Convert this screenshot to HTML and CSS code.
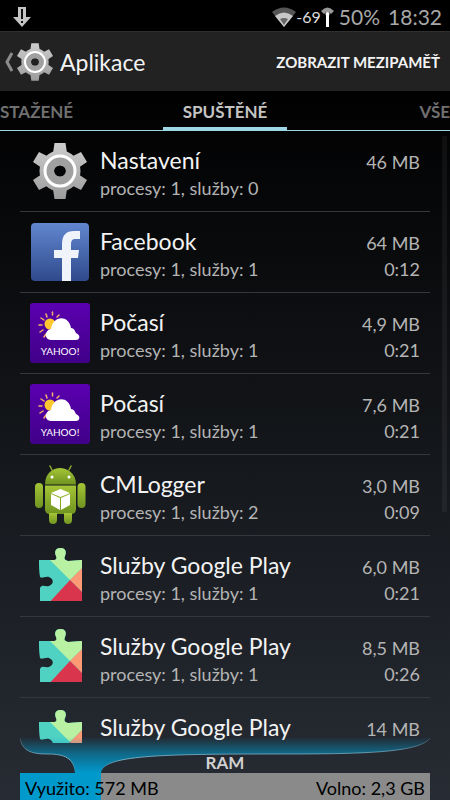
FILE: index.html
```html
<!DOCTYPE html>
<html lang="cs">
<head>
    <meta charset="UTF-8">
    <meta name="viewport" content="width=device-width, initial-scale=1.0">
    <title>Aplikace</title>
    <link rel="stylesheet" href="styles.css">
</head>
<body>
    <!-- Shared icons -->
    <svg class="icon-defs" aria-hidden="true">
        <defs>
            <linearGradient id="metal" gradientUnits="userSpaceOnUse" x1="0" y1="2" x2="0" y2="58">
                <stop offset="0" stop-color="#cdcdcd"/>
                <stop offset="1" stop-color="#9c9c9c"/>
            </linearGradient>
            <linearGradient id="fb-blue" x1="0" y1="0" x2="0" y2="1">
                <stop offset="0" stop-color="#6286cf"/>
                <stop offset="1" stop-color="#2f4a8c"/>
            </linearGradient>
            <linearGradient id="yahoo-purple" x1="0" y1="0" x2="0" y2="1">
                <stop offset="0" stop-color="#5a00b0"/>
                <stop offset="1" stop-color="#400088"/>
            </linearGradient>
            <linearGradient id="droid-green" x1="0" y1="0" x2="0" y2="1">
                <stop offset="0" stop-color="#a5c436"/>
                <stop offset="1" stop-color="#6f9420"/>
            </linearGradient>
            <clipPath id="puzzle-shape">
                <path d="M9 14H23C27 14 27 12 26 10C24 5 26 2 30.500 2C35 2 37 5 35 10C34 12 34 14 38 15L52 14V55H10C10 50 10 46 10 42C12 38 15 41 19 40C24 38 24 33 19 31C15 30 12 33 10 31C9 26 9 20 9 14Z"/>
            </clipPath>
        </defs>
        <symbol id="gear" viewBox="0 0 60 60">
            <g fill="url(#metal)">
                <path d="M24.500 2H35.500L37 12H23ZM24.500 58H35.500L37 48H23ZM9 11L17 15L12 27L3 21ZM51 11L43 15L48 27L57 21ZM9 49L17 45L12 33L3 39ZM51 49L43 45L48 33L57 39Z"/>
                <path fill-rule="evenodd" d="M30 9.500A20.500 20.500 0 1 0 30 50.500A20.500 20.500 0 1 0 30 9.500ZM30 24.500A6 5.500 0 1 1 30 35.500A6 5.500 0 1 1 30 24.500Z"/>
            </g>
            <circle cx="30" cy="30" r="10" fill="none" stroke="#a0a0a0" stroke-width="8"/>
            <circle cx="30" cy="30" r="15" fill="none" stroke="#fff" stroke-width="3"/>
        </symbol>
        <symbol id="facebook" viewBox="0 0 60 60">
            <rect x="1" y="1" width="58" height="58" rx="4" fill="url(#fb-blue)"/>
            <path d="M32 59V36H24V28H32V22Q32 9 44 9H50V17H45Q41 17 41 22V28H49L48 36H41V59Z" fill="#f0f3fa"/>
        </symbol>
        <symbol id="yahoo" viewBox="0 0 60 60">
            <rect width="60" height="60" rx="3" fill="url(#yahoo-purple)"/>
            <path d="M16 11L17 14M22.500 9V12M29 12L27 14M11 15L14 17M9 22L12 22M10 29L13 27M14 34L16 31" stroke="#f7b267" stroke-width="1.500" stroke-linecap="round"/>
            <circle cx="20" cy="21" r="5.500" fill="#fdc82f"/>
            <path d="M21 37C14 37 14 27 21 26C23 12 39 12 41 25C44 25 45 28 46 30C51 32 50 37 46 37Z" fill="#fff"/>
        </symbol>
        <symbol id="android" viewBox="0 0 60 60">
            <g fill="url(#droid-green)">
                <path d="M15 19.500C15 8 23 3 30 3S46 8 46 19.500Z"/>
                <path d="M15 20.500H46V44Q46 49 41 49H20Q15 49 15 44Z"/>
                <rect x="5" y="18" width="8" height="25" rx="4"/>
                <rect x="47.500" y="18" width="8" height="25" rx="4"/>
                <path d="M19 48H27V55Q27 59 23 59Q19 59 19 55ZM34 48H42V55Q42 59 38 59Q34 59 34 55Z"/>
            </g>
            <path d="M22 5L20 1M39 5L41 1" stroke="#8bad2a" stroke-width="1.500" stroke-linecap="round"/>
            <circle cx="22" cy="12" r="1.500" fill="#fff"/>
            <circle cx="39" cy="12" r="1.500" fill="#fff"/>
            <path d="M30.500 24L40 28L30.500 32L21 28ZM21 29L30 33V45L21 40ZM40 29L31 33V45L40 40Z" fill="#fff"/>
        </symbol>
        <symbol id="puzzle" viewBox="0 0 60 60">
            <g clip-path="url(#puzzle-shape)">
                <path d="M0 0H60V60H0Z" fill="#4fd2c2"/>
                <path d="M20 14L16 0H60V14L40 34Z" fill="#b9f1a3"/>
                <path d="M60 14L40 34L60 54Z" fill="#fb9a74"/>
                <path d="M40 34L60 54V60H16Z" fill="#d9364e"/>
            </g>
        </symbol>
    </svg>

    <div class="screen">
        <!-- Status bar -->
        <div class="status-bar">
            <svg class="download" viewBox="0 0 20 20" aria-hidden="true">
                <path d="M6 0H14V10H19L10 20L1 10H6Z" fill="#c4c4c4"/>
                <path d="M9 2H11V12H9ZM9 14H11V16H9Z" fill="#111"/>
            </svg>
            <div class="status-right">
                <svg class="wifi" viewBox="0 0 24 20" aria-hidden="true">
                    <path d="M0 5Q12 -4 24 5L12 20Z" fill="#555"/>
                    <path d="M3 9Q12 2 21 9L12 20Z" fill="#c8c8c8"/>
                    <path d="M8 12Q12 10 16 12L12 18Z" fill="#666"/>
                </svg>
                <span class="signal">-69</span>
                <svg class="antenna" viewBox="0 0 13 20" aria-hidden="true">
                    <path d="M0 4Q6.500 -3 13 4L10 7Q6.500 3 3 7Z" fill="#999"/>
                    <circle cx="6.500" cy="7" r="2" fill="#fff"/>
                    <path d="M5 7H8V20H5Z" fill="#fff"/>
                </svg>
                <span class="battery">50%</span>
                <span class="clock">18:32</span>
            </div>
        </div>

        <!-- Action bar -->
        <header class="action-bar">
            <a href="#" class="up">
                <svg class="chevron" viewBox="0 0 8 20" aria-hidden="true"><path d="M7 1L2 10L7 19" fill="none" stroke="#8c8c8c" stroke-width="3"/></svg>
                <svg class="up-icon" aria-hidden="true"><use href="#gear"/></svg>
                <h1>Aplikace</h1>
            </a>
            <button type="button" class="cache-button">Zobrazit mezipaměť</button>
        </header>

        <!-- Tabs -->
        <nav class="tabs">
            <button type="button" class="tab">Stažené</button>
            <button type="button" class="tab active">Spuštěné</button>
            <button type="button" class="tab last">Vše</button>
        </nav>

        <!-- Running apps -->
        <main class="app-list">
            <ul>
                <li class="app">
                    <svg class="app-icon" aria-hidden="true"><use href="#gear"/></svg>
                    <div class="info"><h2>Nastavení</h2><p>procesy: 1, služby: 0</p></div>
                    <div class="usage"><span class="size">46 MB</span></div>
                </li>
                <li class="app">
                    <svg class="app-icon" aria-hidden="true"><use href="#facebook"/></svg>
                    <div class="info"><h2>Facebook</h2><p>procesy: 1, služby: 1</p></div>
                    <div class="usage"><span class="size">64 MB</span><span class="time">0:12</span></div>
                </li>
                <li class="app">
                    <svg class="app-icon" viewBox="0 0 60 60"><use href="#yahoo"/><text x="30" y="52" class="yahoo-name">YAHOO!</text></svg>
                    <div class="info"><h2>Počasí</h2><p>procesy: 1, služby: 1</p></div>
                    <div class="usage"><span class="size">4,9 MB</span><span class="time">0:21</span></div>
                </li>
                <li class="app">
                    <svg class="app-icon" viewBox="0 0 60 60"><use href="#yahoo"/><text x="30" y="52" class="yahoo-name">YAHOO!</text></svg>
                    <div class="info"><h2>Počasí</h2><p>procesy: 1, služby: 1</p></div>
                    <div class="usage"><span class="size">7,6 MB</span><span class="time">0:21</span></div>
                </li>
                <li class="app">
                    <svg class="app-icon" aria-hidden="true"><use href="#android"/></svg>
                    <div class="info"><h2>CMLogger</h2><p>procesy: 1, služby: 2</p></div>
                    <div class="usage"><span class="size">3,0 MB</span><span class="time">0:09</span></div>
                </li>
                <li class="app">
                    <svg class="app-icon" aria-hidden="true"><use href="#puzzle"/></svg>
                    <div class="info"><h2>Služby Google Play</h2><p>procesy: 1, služby: 1</p></div>
                    <div class="usage"><span class="size">6,0 MB</span><span class="time">0:21</span></div>
                </li>
                <li class="app">
                    <svg class="app-icon" aria-hidden="true"><use href="#puzzle"/></svg>
                    <div class="info"><h2>Služby Google Play</h2><p>procesy: 1, služby: 1</p></div>
                    <div class="usage"><span class="size">8,5 MB</span><span class="time">0:26</span></div>
                </li>
                <li class="app">
                    <svg class="app-icon" aria-hidden="true"><use href="#puzzle"/></svg>
                    <div class="info"><h2>Služby Google Play</h2></div>
                    <div class="usage"><span class="size">14 MB</span></div>
                </li>
            </ul>
            <div class="scrollbar"></div>
        </main>

        <!-- Memory -->
        <footer class="memory">
            <svg class="funnel" viewBox="0 0 410 40" preserveAspectRatio="none" aria-hidden="true">
                <defs>
                    <linearGradient id="glow" x1="0" y1="0" x2="0" y2="1">
                        <stop offset="0.100" stop-color="#0099cc" stop-opacity="0"/>
                        <stop offset="0.500" stop-color="#0099cc" stop-opacity="0.550"/>
                        <stop offset="1" stop-color="#0099cc"/>
                    </linearGradient>
                    <linearGradient id="edge" x1="0" y1="0" x2="0" y2="1">
                        <stop offset="0" stop-color="#8fc3d6" stop-opacity="0.200"/>
                        <stop offset="0.600" stop-color="#8fc3d6" stop-opacity="0.800"/>
                        <stop offset="1" stop-color="#8fc3d6" stop-opacity="0"/>
                    </linearGradient>
                </defs>
                <path d="M0 0V5C2 17 10 21 27 21C45 21 54 25 55 40H81C82 22 140 21 260 21C340 21 400 20 410 5V0Z" fill="url(#glow)"/>
                <path d="M0 5C2 17 10 21 27 21C45 21 54 25 55 40M81 40C82 22 140 21 260 21C340 21 400 20 410 5" fill="none" stroke="url(#edge)"/>
            </svg>
            <h2 class="memory-title">RAM</h2>
            <div class="memory-bar">
                <div class="used" style="width: 19.700%"></div>
                <span>Využito: 572 MB</span>
                <span>Volno: 2,3 GB</span>
            </div>
        </footer>
    </div>
</body>
</html>
```
FILE: styles.css
```css
/* Basic Reset */
* {
    box-sizing: border-box;
}

body {
    margin: 0;
    font-family: Lato, sans-serif;
    background-color: #000;
    color: #f3f3f3;
}

h1, h2, p, ul {
    margin: 0;
    padding: 0;
    font-weight: normal;
}

button {
    border: none;
    background: none;
    font-family: inherit;
    font-weight: bold;
    text-transform: uppercase;
    cursor: pointer;
}

.icon-defs {
    display: block;
    width: 0;
    height: 0;
}

.screen {
    display: flex;
    flex-direction: column;
    height: 100vh;
    overflow: hidden;
    background: linear-gradient(#000 10%, #272c34);
}

/* Status Bar */
.status-bar {
    display: flex;
    align-items: center;
    justify-content: space-between;
    height: 31px;
    padding: 2px 8px 0 12px;
    background-color: #000;
    flex-shrink: 0;
}

.download {
    width: 20px;
    height: 20px;
}

.status-right {
    display: flex;
    align-items: center;
    color: #a8a8a8;
    font-size: 21px;
}

.wifi {
    width: 24px;
    height: 20px;
}

.signal {
    color: #ddd;
    font-size: 16px;
}

.antenna {
    width: 13px;
    height: 20px;
}

.battery {
    margin: 0 8px 0 5px;
}

/* Action Bar */
.action-bar {
    display: flex;
    align-items: center;
    justify-content: space-between;
    height: 60px;
    padding: 0 10px 0 5px;
    background-color: #222;
    border-top: 1px solid #303030;
    flex-shrink: 0;
}

.up {
    display: flex;
    align-items: center;
    color: inherit;
    text-decoration: none;
}

.chevron {
    width: 8px;
    height: 20px;
    margin-right: 2px;
}

.up-icon {
    width: 40px;
    height: 40px;
    margin-right: 5px;
}

.up h1 {
    font-size: 23px;
}

.cache-button {
    padding: 0;
    color: #f3f3f3;
    font-size: 15px;
}

/* Tabs */
.tabs {
    display: grid;
    grid-template-columns: 1fr auto 1fr;
    height: 40px;
    border-bottom: 1px solid #9fd6e6;
    flex-shrink: 0;
}

.tab {
    padding: 2px 0 0;
    color: #707070;
    font-size: 17px;
    text-align: left;
}

.tab.active {
    padding: 2px 20px 0;
    color: #c4c4c4;
    box-shadow: inset 0 -3px #9fd6e6;
}

.tab.last {
    text-align: right;
}

/* App List */
.app-list {
    position: relative;
    flex: 1;
    min-height: 0;
    padding: 0 20px;
    overflow: hidden;
}

.app {
    display: flex;
    height: 81px;
    padding: 10px 10px 0;
    border-bottom: 1px solid #34373b;
}

.app-icon {
    width: 60px;
    height: 60px;
    margin-right: 10px;
}

.info {
    flex: 1;
    padding-top: 4px;
}

.info h2 {
    font-size: 23px;
    line-height: 30px;
}

.info p {
    color: #b4b4b4;
    font-size: 18px;
    line-height: 26px;
}

.usage {
    display: flex;
    flex-direction: column;
    padding-top: 8px;
    color: #b4b4b4;
    font-size: 18px;
    line-height: 26px;
    text-align: right;
}

.yahoo-name {
    fill: #fff;
    font-size: 10px;
    text-anchor: middle;
}

.scrollbar {
    position: absolute;
    top: 5px;
    right: 3px;
    width: 5px;
    height: 376px;
    background-color: rgba(255, 255, 255, 0.05);
}

/* Memory */
.memory {
    position: relative;
    padding: 0 20px;
    flex-shrink: 0;
}

.funnel {
    position: absolute;
    left: 20px;
    bottom: 27px;
    width: calc(100% - 40px);
    height: 40px;
}

.memory-title {
    position: relative;
    height: 30px;
    padding-top: 10px;
    color: #d0d0d0;
    font-size: 17px;
    font-weight: bold;
    line-height: 20px;
    text-align: center;
}

.memory-bar {
    position: relative;
    display: flex;
    align-items: center;
    justify-content: space-between;
    height: 27px;
    padding: 2px 5px 0;
    background-color: #8a8a8a;
    color: #000;
    font-size: 18px;
}

.memory-bar span {
    position: relative;
}

.used {
    position: absolute;
    top: 0;
    left: 0;
    height: 100%;
    background-color: #0099cc;
}
```
